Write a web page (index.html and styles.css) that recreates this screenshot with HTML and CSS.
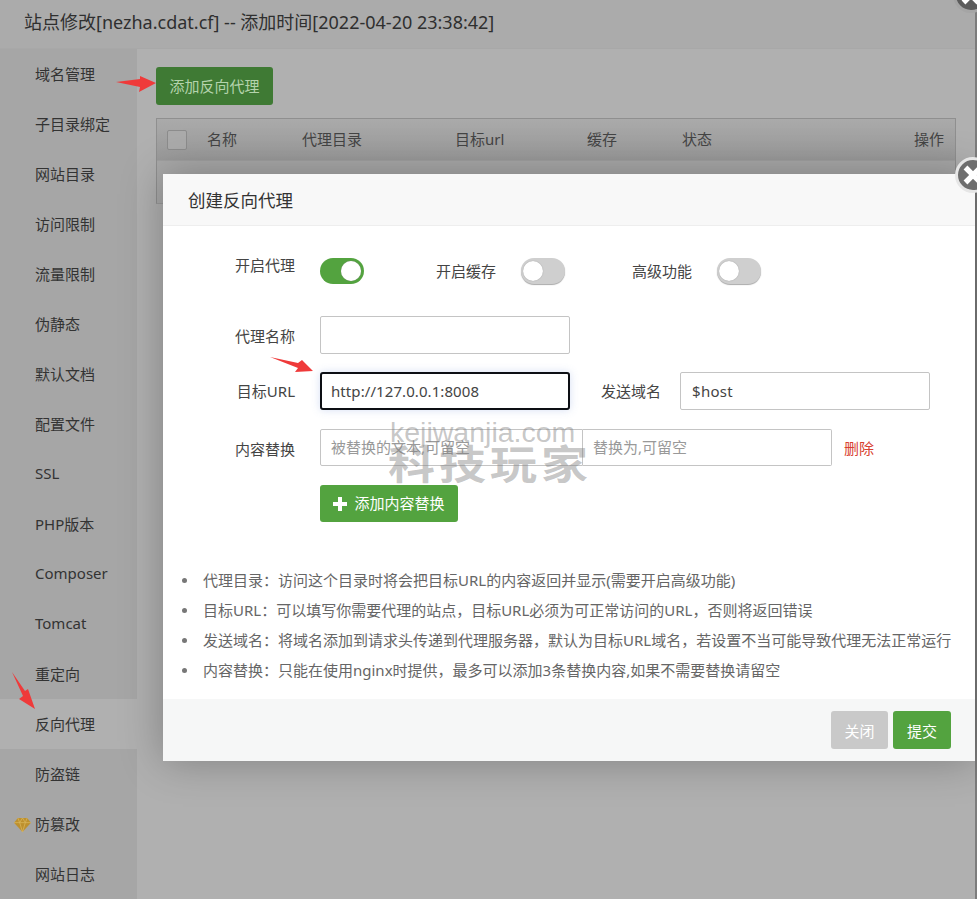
FILE: index.html
```html
<!DOCTYPE html>
<html lang="zh-CN">
<head>
<meta charset="utf-8">
<title>站点修改</title>
<link rel="stylesheet" href="styles.css">
</head>
<body>
<div class="layer">
  <button class="round-close top-close" aria-label="关闭"><svg viewBox="0 0 20 20"><path d="M5 5l10 10M15 5L5 15"/></svg></button>
  <header class="layer-title">站点修改[nezha.cdat.cf] -- 添加时间[2022-04-20 23:38:42]</header>
  <div class="layer-body">
    <nav class="side">
      <a>域名管理</a><a>子目录绑定</a><a>网站目录</a><a>访问限制</a><a>流量限制</a><a>伪静态</a><a>默认文档</a><a>配置文件</a><a>SSL</a><a>PHP版本</a><a>Composer</a><a>Tomcat</a><a>重定向</a><a class="on">反向代理</a><a>防盗链</a>
      <a class="gem"><svg viewBox="0 0 18 16"><path class="g1" d="M4 1h10l4 5-9 10L0 6z"/><path class="g2" d="M0 6h18M6 6l3 10 3-10M4 1l2 5 3-5 3 5 2-5"/></svg>防篡改</a>
      <a>网站日志</a>
    </nav>
    <main class="main">
      <button class="add-btn">添加反向代理</button>
      <div class="tbl">
        <div class="tbl-head">
          <span class="chk"></span><span class="c1">名称</span><span class="c2">代理目录</span><span class="c3">目标url</span><span class="c4">缓存</span><span class="c5">状态</span><span class="c6">操作</span>
        </div>
        <div class="tbl-row"></div>
      </div>
    </main>
  </div>
</div>

<section class="modal">
  <button class="round-close modal-close" aria-label="关闭"><svg viewBox="0 0 20 20"><path d="M5 5l10 10M15 5L5 15"/></svg></button>
  <header class="modal-title">创建反向代理</header>
  <div class="modal-body">
    <div class="row toggles">
      <span class="label first">开启代理</span><span class="sw on"></span>
      <span class="label second">开启缓存</span><span class="sw"></span>
      <span class="label third">高级功能</span><span class="sw"></span>
    </div>
    <div class="row name-row">
      <span class="label">代理名称</span><span class="inp"></span>
    </div>
    <div class="row url-row">
      <span class="label">目标URL</span><span class="inp focus">http://127.0.0.1:8008</span>
      <span class="label host-label">发送域名</span><span class="inp host">$host</span>
    </div>
    <div class="row rep-row">
      <span class="label">内容替换</span>
      <span class="inp ph wide">被替换的文本,可留空</span><span class="inp ph wide joined">替换为,可留空</span>
      <span class="del">删除</span>
    </div>
    <button class="add-rep"><svg viewBox="0 0 14 14"><path d="M5 0h4v5h5v4H9v5H5V9H0V5h5z"/></svg>添加内容替换</button>
    <ul class="notes">
      <li>代理目录：访问这个目录时将会把目标URL的内容返回并显示(需要开启高级功能)</li>
      <li>目标URL：可以填写你需要代理的站点，目标URL必须为可正常访问的URL，否则将返回错误</li>
      <li>发送域名：将域名添加到请求头传递到代理服务器，默认为目标URL域名，若设置不当可能导致代理无法正常运行</li>
      <li>内容替换：只能在使用nginx时提供，最多可以添加3条替换内容,如果不需要替换请留空</li>
    </ul>
  </div>
  <footer class="modal-foot"><button class="btn-close">关闭</button><button class="btn-ok">提交</button></footer>
</section>

<div class="mark"><span class="mark-en">kejiwanjia.com</span><span class="mark-cn">科技玩家</span></div>

<svg class="arrow a1" viewBox="0 0 40 16"><path d="M0 6L24 3V0L40 7L23 16L24 11Z"/></svg>
<svg class="arrow a2" viewBox="0 0 45 24"><path d="M0 0L28 6L32 3L43 14L25 15L28 11Z"/></svg>
<svg class="arrow a3" viewBox="0 0 24 38"><path d="M0 0L13 19L16 17L23 37L7 27L11 24Z"/></svg>
</body>
</html>
```
FILE: styles.css
```css
* { box-sizing: border-box; }
html, body { margin: 0; padding: 0; height: 899px; overflow: hidden; }
body { font-family: "Noto Sans", "Noto Sans CJK SC", sans-serif; font-size: 15px; color: #333; background: #b0b0b0; position: relative; }
button { font: inherit; border: 0; padding: 0; }

.layer { height: 899px; display: flex; flex-direction: column; border-right: 2px solid #7c7c7c; }
.layer-title { flex: none; height: 49px; background: #ababab; border-bottom: 1px solid #a8a8a8; padding: 9px 0 0 24px; font-size: 18px; line-height: 26px; color: #2f2f2f; white-space: nowrap; }
.layer-body { flex: 1; display: flex; }

.side { flex: none; width: 137px; background: #a6a6a6; }
.side a { display: flex; align-items: center; height: 50px; padding: 0 0 2px 35px; color: #333; position: relative; }
.side a.on { background: #b0b0b0; }
.gem svg { position: absolute; left: 14px; top: 18px; width: 17px; height: 15px; }
.g1 { fill: #bd902e; }
.g2 { fill: none; stroke: #d9b55c; stroke-width: .8; }

.main { flex: 1; padding: 18px 19px 0; background: #b0b0b0; }
.add-btn { display: block; width: 117px; height: 38px; padding-bottom: 2px; background: #3f7a34; color: #b4d3ac; border-radius: 3px; }
.tbl { margin-top: 13px; border: 1px solid #8f8f8f; border-bottom-color: #9a9a9a; }
.tbl-head { height: 42px; position: relative; background: linear-gradient(#aaa, #9a9a9a); border-bottom: 1px solid #a0a0a0; color: #444; line-height: 40px; }
.tbl-head span { position: absolute; top: 0; }
.tbl-head .chk { top: 11px; left: 10px; width: 20px; height: 20px; border: 1px solid #8c8c8c; background: #ababab; border-radius: 2px; }
.c1 { left: 50px; } .c2 { left: 145px; } .c3 { left: 298px; } .c4 { left: 430px; } .c5 { left: 525px; } .c6 { right: 11px; }
.tbl-row { height: 42px; background: #a9a9a9; }

.modal { position: absolute; left: 163px; top: 174px; width: 812px; height: 587px; background: #fff; display: flex; flex-direction: column; box-shadow: 0 0 40px rgba(0,0,0,.28); }
.modal-title { flex: none; height: 52px; background: #f8f8f8; border-bottom: 1px solid #eee; padding-left: 25px; font-size: 17.5px; line-height: 52px; color: #333; }
.modal-body { flex: 1; position: relative; padding-top: 32px; }
.modal-foot { flex: none; height: 62px; background: #f6f7f7; display: flex; justify-content: flex-end; align-items: flex-start; gap: 5px; padding: 12px 24px 0 0; }
.modal-foot button { height: 38px; border-radius: 3px; color: #fff; font-size: 15px; }
.btn-close { width: 57px; background: #c9c9c9; }
.btn-ok { width: 58px; background: #53a33f; }

.round-close { position: absolute; width: 36px; height: 36px; border-radius: 50%; background: #6e6e6e; border: 3px solid #e6e6e6; display: block; }
.round-close svg { display: block; width: 30px; height: 30px; fill: none; stroke: #fff; stroke-width: 3.6; }
.modal-close { left: 792px; top: -17px; z-index: 2; }
.top-close { left: 953px; top: -23px; z-index: 2; background: #5c5c5c; border-color: #a5a5a5; }

.row { display: flex; align-items: center; padding-left: 56px; }
.label { flex: none; width: 76px; text-align: right; color: #444; }
.toggles { height: 26px; }
.toggles .label { margin-bottom: 2px; }
.toggles .first { margin-bottom: 14px; }
.sw { flex: none; width: 44px; height: 26px; border-radius: 13px; background: #cfcfcf; position: relative; box-shadow: 0 1px 1px #aaa; margin-left: 25px; }
.sw::after { content: ""; position: absolute; left: 2px; top: 3px; width: 20px; height: 20px; border-radius: 50%; background: #fff; box-shadow: 0 0 1px #888; }
.sw.on { background: #53a33f; box-shadow: none; }
.sw.on::after { left: 21px; }
.label.second { margin-left: 71px; width: 61px; }
.label.third { margin-left: 66px; width: 61px; }
.inp { flex: none; display: block; width: 250px; height: 38px; margin-left: 25px; background: #fff; border: 1px solid #c4c4c4; border-radius: 2px; padding-left: 10px; line-height: 36px; color: #444; }
.inp.focus { border: 2px solid #0d0f14; border-radius: 3px; padding-left: 9px; line-height: 34px; letter-spacing: .08px; box-shadow: 0 0 8px rgba(120,150,220,.3); }
.name-row { margin-top: 32px; }
.url-row { margin-top: 18px; }
.url-row > .label:first-child { margin-bottom: 2px; }
.label.host-label { margin-left: 30px; width: 61px; margin-bottom: 2px; }
.inp.host { margin-left: 19px; padding-left: 11px; letter-spacing: .3px; }
.rep-row { margin-top: 19px; }
.rep-row .label { margin-top: 2px; }
.inp.wide { height: 37px; line-height: 35px; width: 263px; border-radius: 2px 0 0 2px; }
.inp.joined { margin-left: 0; width: 249px; border-left: 0; border-radius: 0 2px 2px 0; }
.ph { color: #999; }
.del { margin-left: 12px; color: #d8412f; }
.add-rep { display: flex; align-items: center; justify-content: center; gap: 7px; width: 138px; height: 37px; padding-bottom: 2px; margin: 19px 0 0 157px; background: #53a33f; color: #fff; border-radius: 3px; }
.add-rep svg { width: 14px; height: 14px; fill: #fff; margin-top: 2px; }
.notes { margin: 43px 0 0; padding: 0 0 0 19px; list-style: none; color: #666; line-height: 30px; }
.notes li { display: flex; align-items: center; white-space: nowrap; }
.notes li::before { content: ""; flex: none; width: 5px; height: 5px; margin-right: 16px; border-radius: 50%; background: #777; }

.mark { position: absolute; left: 388px; top: 416px; display: flex; flex-direction: column; font-family: "Liberation Sans", "Noto Sans CJK SC", sans-serif; color: rgba(130,130,130,.45); pointer-events: none; }
.mark-en { font-size: 28.5px; line-height: 32px; margin-left: 2px; white-space: nowrap; }
.mark-cn { font-size: 47px; line-height: 50px; font-family: "Noto Sans CJK SC", sans-serif; font-weight: 700; letter-spacing: 4px; margin-top: -7px; white-space: nowrap; transform: scaleY(.84); transform-origin: 0 0; }

.arrow { position: absolute; fill: #ef3a3a; }
.a1 { left: 116px; top: 76px; width: 40px; height: 16px; }
.a2 { left: 270px; top: 357px; width: 45px; height: 24px; }
.a3 { left: 12px; top: 672px; width: 24px; height: 38px; }
```
